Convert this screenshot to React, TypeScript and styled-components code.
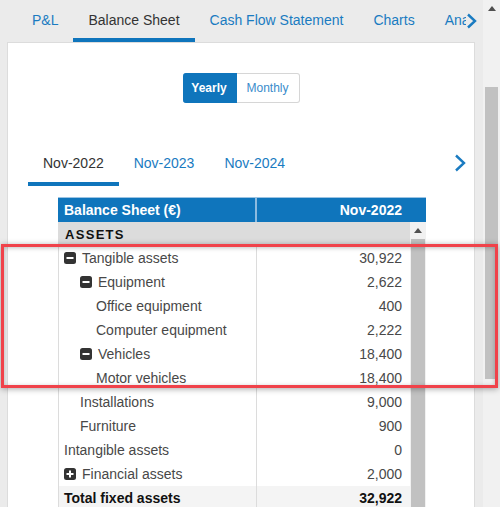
import * as React from 'react';
import styled, { createGlobalStyle, css } from 'styled-components';

const GlobalStyle = createGlobalStyle`
  html, body {
    margin: 0;
    padding: 0;
    background: #ebebeb;
  }
  body {
    font-family: "Liberation Sans", Arial, sans-serif;
    font-size: 14px;
    color: #333;
  }
`;

const BLUE = '#0f75bc';

const Page = styled.div`
  position: relative;
  width: 500px;
  height: 507px;
  overflow: hidden;
  display: flex;
  background: #ebebeb;
`;

const Main = styled.div`
  flex: 1;
  min-width: 0;
  display: flex;
  flex-direction: column;
`;

const TabBar = styled.div`
  position: relative;
  height: 42px;
  flex-shrink: 0;
  display: flex;
  padding-left: 17px;
  overflow: hidden;
  white-space: nowrap;
`;

const Tab = styled.div<{ active?: boolean }>`
  height: 42px;
  box-sizing: border-box;
  padding: 0 15px;
  display: flex;
  align-items: center;
  font-size: 14px;
  color: #1a7bc1;
  border-bottom: 4px solid transparent;
  padding-top: 2px;
  ${props =>
    props.active &&
    css`
      color: #333;
      border-bottom-color: ${BLUE};
    `}
`;

const TabScroll = styled.div`
  position: absolute;
  right: 0;
  top: 0;
  width: 17px;
  height: 38px;
  background: #ebebeb;
  display: flex;
  align-items: center;
  justify-content: flex-start;
  padding-top: 2px;
`;

const Panel = styled.div`
  flex: 1;
  margin: 0 8px 0 7px;
  background: #fff;
  border: 1px solid #dcdcdc;
  border-bottom: none;
  padding-top: 30px;
  display: flex;
  flex-direction: column;
`;

const Toggle = styled.div`
  display: flex;
  justify-content: center;
`;

const ToggleButton = styled.div<{ active?: boolean; width: number }>`
  width: ${props => props.width}px;
  height: 30px;
  box-sizing: border-box;
  display: flex;
  align-items: center;
  justify-content: center;
  font-size: 12px;
  color: #3a8ccb;
  background: #fff;
  border: 1px solid #d6d6d6;
  border-left: none;
  border-radius: 0 3px 3px 0;
  ${props =>
    props.active &&
    css`
      background: ${BLUE};
      border-color: ${BLUE};
      color: #fff;
      font-weight: bold;
      border-radius: 3px 0 0 3px;
    `}
`;

const PeriodRow = styled.div`
  margin-top: 41px;
  display: flex;
  align-items: stretch;
  padding: 0 8px 0 20px;
`;

const PeriodTab = styled(Tab)`
  padding: 0 15px;
`;

const PeriodScroll = styled.div`
  margin-left: auto;
  width: 12px;
  display: flex;
  align-items: center;
  padding-bottom: 4px;
`;

const Table = styled.div`
  width: 368px;
  margin: 11px 0 0 50px;
  display: flex;
  flex-direction: column;
  flex: 1;
  min-height: 0;
`;

const HeaderRow = styled.div`
  display: flex;
  height: 25px;
  box-sizing: border-box;
  background: ${BLUE};
  border-top: 1px solid #9cc4e3;
  color: #fff;
  font-weight: bold;
  font-size: 14px;
`;

const HeaderCell = styled.div<{ right?: boolean }>`
  display: flex;
  align-items: center;
  box-sizing: border-box;
  ${props =>
    props.right
      ? css`
          flex: 1;
          justify-content: flex-end;
          padding-right: 24px;
        `
      : css`
          width: 199px;
          padding-left: 6px;
          border-right: 2px solid #8cbbe0;
        `}
`;

const Body = styled.div`
  display: flex;
  flex: 1;
  min-height: 0;
`;

const Rows = styled.div`
  flex: 1;
  border-left: 1px solid #dcdcdc;
`;

const Row = styled.div<{ kind?: 'section' | 'total' }>`
  display: flex;
  height: 24px;
  font-size: 14px;
  color: #484848;
  ${props =>
    props.kind === 'section' &&
    css`
      background: #dcdcdc;
      color: #111;
      font-weight: bold;
      font-size: 13px;
      letter-spacing: 1.3px;
    `}
  ${props =>
    props.kind === 'total' &&
    css`
      background: #f4f4f4;
      color: #111;
      font-weight: bold;
    `}
`;

const LabelCell = styled.div<{ level: number }>`
  width: 198px;
  flex-shrink: 0;
  box-sizing: border-box;
  display: flex;
  align-items: center;
  gap: 6px;
  padding-left: ${props => 5 + props.level * 16}px;
  border-right: 1px solid #dcdcdc;
  white-space: nowrap;
`;

const SectionCell = styled.div`
  flex: 1;
  display: flex;
  align-items: center;
  padding-left: 6px;
`;

const ValueCell = styled.div`
  flex: 1;
  display: flex;
  align-items: center;
  justify-content: flex-end;
  padding-right: 8px;
`;

const InnerScroll = styled.div`
  width: 16px;
  flex-shrink: 0;
  background: #f1f1f1;
  display: flex;
  flex-direction: column;
  align-items: center;
`;

const ScrollArrow = styled.div`
  height: 17px;
  display: flex;
  align-items: center;
  justify-content: center;
  flex-shrink: 0;
`;

const InnerThumb = styled.div`
  width: 14px;
  flex: 1;
  background: #c1c1c1;
`;

const PageScroll = styled.div`
  width: 17px;
  flex-shrink: 0;
  background: #f1f1f1;
  display: flex;
  flex-direction: column;
  align-items: center;
`;

const PageThumb = styled.div`
  width: 13px;
  height: 292px;
  margin-top: 70px;
  background: #c1c1c1;
`;

const Highlight = styled.div`
  position: absolute;
  left: 1px;
  top: 244px;
  width: 497px;
  height: 144px;
  box-sizing: border-box;
  border: 3px solid #f0424a;
  box-shadow: 0 1px 6px rgba(0, 0, 0, 0.35), inset 0 1px 4px rgba(0, 0, 0, 0.25);
  pointer-events: none;
`;

const Chevron: React.FC<{ w: number; h: number }> = ({ w, h }) => (
  <svg width={w} height={h} viewBox={`0 0 ${w} ${h}`}>
    <polyline
      points={`2,1.5 ${w - 2},${h / 2} 2,${h - 1.5}`}
      fill="none"
      stroke="#1a7bc1"
      strokeWidth={2.4}
    />
  </svg>
);

const UpArrow = () => (
  <svg width="8" height="5" viewBox="0 0 8 5">
    <polygon points="0,5 8,5 4,0" fill="#505050" />
  </svg>
);

const TreeIcon: React.FC<{ open: boolean }> = ({ open }) => (
  <svg width="12" height="12" viewBox="0 0 12 12">
    <rect x="0" y="0" width="12" height="12" rx="2.5" fill="#333" />
    <rect x="2.5" y="5" width="7" height="2" fill="#fff" />
    {!open && <rect x="5" y="2.5" width="2" height="7" fill="#fff" />}
  </svg>
);

interface Line {
  label: string;
  value: string;
  level: number;
  toggle?: 'open' | 'closed';
  total?: boolean;
}

const lines: Line[] = [
  { label: 'Tangible assets', value: '30,922', level: 0, toggle: 'open' },
  { label: 'Equipment', value: '2,622', level: 1, toggle: 'open' },
  { label: 'Office equipment', value: '400', level: 2 },
  { label: 'Computer equipment', value: '2,222', level: 2 },
  { label: 'Vehicles', value: '18,400', level: 1, toggle: 'open' },
  { label: 'Motor vehicles', value: '18,400', level: 2 },
  { label: 'Installations', value: '9,000', level: 1 },
  { label: 'Furniture', value: '900', level: 1 },
  { label: 'Intangible assets', value: '0', level: 0 },
  { label: 'Financial assets', value: '2,000', level: 0, toggle: 'closed' },
  { label: 'Total fixed assets', value: '32,922', level: 0, total: true },
];

const tabs = ['P&L', 'Balance Sheet', 'Cash Flow Statement', 'Charts', 'Analysis'];
const periods = ['Nov-2022', 'Nov-2023', 'Nov-2024'];

const App: React.FC = () => {
  return (
    <>
      <GlobalStyle />
      <Page>
        <Main>
          <TabBar>
            {tabs.map(t => (
              <Tab key={t} active={t === 'Balance Sheet'}>
                {t}
              </Tab>
            ))}
            <TabScroll>
              <Chevron w={11} h={16} />
            </TabScroll>
          </TabBar>
          <Panel>
            <Toggle>
              <ToggleButton active width={54}>Yearly</ToggleButton>
              <ToggleButton width={63}>Monthly</ToggleButton>
            </Toggle>
            <PeriodRow>
              {periods.map(p => (
                <PeriodTab key={p} active={p === 'Nov-2022'}>
                  {p}
                </PeriodTab>
              ))}
              <PeriodScroll>
                <Chevron w={12} h={18} />
              </PeriodScroll>
            </PeriodRow>
            <Table>
              <HeaderRow>
                <HeaderCell>Balance Sheet (€)</HeaderCell>
                <HeaderCell right>Nov-2022</HeaderCell>
              </HeaderRow>
              <Body>
                <Rows>
                  <Row kind="section">
                    <SectionCell>ASSETS</SectionCell>
                  </Row>
                  {lines.map(l => (
                    <Row key={l.label} kind={l.total ? 'total' : undefined}>
                      <LabelCell level={l.level}>
                        {l.toggle && <TreeIcon open={l.toggle === 'open'} />}
                        {l.label}
                      </LabelCell>
                      <ValueCell>{l.value}</ValueCell>
                    </Row>
                  ))}
                </Rows>
                <InnerScroll>
                  <ScrollArrow>
                    <UpArrow />
                  </ScrollArrow>
                  <InnerThumb />
                </InnerScroll>
              </Body>
            </Table>
          </Panel>
        </Main>
        <PageScroll>
          <ScrollArrow>
            <UpArrow />
          </ScrollArrow>
          <PageThumb />
        </PageScroll>
        <Highlight />
      </Page>
    </>
  );
};

export default App;
